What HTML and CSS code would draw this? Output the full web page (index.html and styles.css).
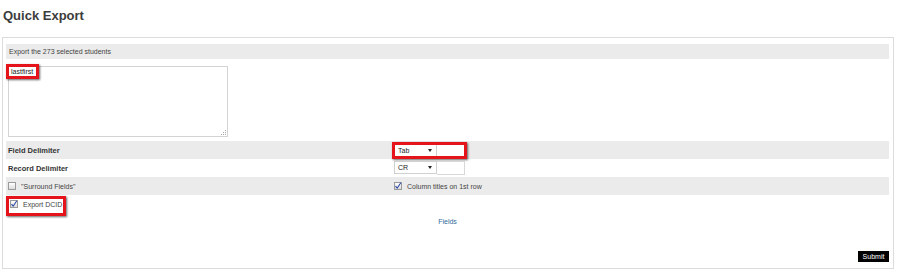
FILE: index.html
```
<!DOCTYPE html>
<html lang="en">
<head>
    <meta charset="UTF-8">
    <title>Quick Export</title>
    <link rel="stylesheet" href="styles.css">
</head>
<body>
    <h1 class="title">Quick Export</h1>

    <form class="box">
        <div class="head-row">Export the 273 selected students</div>

        <div class="text-row">
            <div class="textarea">
                <span class="mark">lastfirst<span class="hl"></span></span>
                <svg class="grip" width="6" height="6" viewBox="0 0 6 6">
                    <rect x="5" y="1" width="1" height="1" fill="#aaa"/>
                    <rect x="5" y="3" width="1" height="1" fill="#aaa"/>
                    <rect x="3" y="3" width="1" height="1" fill="#aaa"/>
                    <rect x="5" y="5" width="1" height="1" fill="#aaa"/>
                    <rect x="3" y="5" width="1" height="1" fill="#aaa"/>
                    <rect x="1" y="5" width="1" height="1" fill="#aaa"/>
                </svg>
            </div>
        </div>

        <div class="row alt">
            <strong>Field Delimiter</strong>
            <div class="pick">
                <span class="select">Tab<span class="caret"></span></span><span class="field"></span>
                <span class="hl"></span>
            </div>
        </div>

        <div class="row">
            <strong>Record Delimiter</strong>
            <div class="pick">
                <span class="select">CR<span class="caret"></span></span><span class="field small"></span>
            </div>
        </div>

        <div class="row alt">
            <label class="check"><span class="cb"></span>"Surround Fields"</label>
            <label class="check"><span class="cb"><svg width="8" height="8" viewBox="0 0 8 8"><path d="M1.5 4.2 L3.2 6.2 L6.8 0.8" fill="none" stroke="#2b47a6" stroke-width="1.1"/></svg></span>Column titles on 1st row</label>
        </div>

        <div class="row">
            <label class="check dcid"><span class="cb"><svg width="8" height="8" viewBox="0 0 8 8"><path d="M1.5 4.2 L3.2 6.2 L6.8 0.8" fill="none" stroke="#2b47a6" stroke-width="1.1"/></svg></span>Export DCID<span class="hl"></span></label>
        </div>

        <div class="fields-row"><a href="#">Fields</a></div>

        <div class="submit-row">
            <button type="button" class="submit">Submit</button>
        </div>
    </form>
</body>
</html>
```

FILE: styles.css
```
body {
    margin: 0;
    padding: 0 0 0 2px;
    font-family: "Liberation Sans", Arial, sans-serif;
    font-size: 8px;
    color: #333;
    background: #fff;
}

.title {
    margin: 8px 0 13px 1px;
    font-size: 13px;
    line-height: 16px;
    color: #3c3c3c;
}

.box {
    width: 892px;
    box-sizing: border-box;
    border: 1px solid #dcdcdc;
    padding: 6px 4px 6px 3px;
    margin: 0;
}

.head-row {
    height: 15px;
    line-height: 15px;
    padding-left: 3px;
    background: #ebebeb;
    color: #444;
    font-size: 7px;
}

.text-row {
    padding: 7px 0 4px 2px;
}

.textarea {
    position: relative;
    width: 220px;
    height: 71px;
    box-sizing: border-box;
    border: 1px solid #d4d4d4;
    padding: 0 2px;
    font-size: 7px;
    line-height: 9px;
    color: #222;
}

.mark {
    position: relative;
}

.grip {
    position: absolute;
    right: 1px;
    bottom: 1px;
}

.hl {
    position: absolute;
    top: -3px;
    left: -4px;
    right: -4px;
    bottom: -3px;
    border: 3px solid #e5141b;
    box-shadow: 1px 1px 2px rgba(0, 0, 0, 0.6);
    pointer-events: none;
}

.mark .hl {
    top: -4px;
    left: -5px;
    right: -6px;
    bottom: -4px;
}

.row {
    display: grid;
    grid-template-columns: 386px 1fr;
    align-items: center;
    height: 18px;
    padding-left: 2px;
}

.row.alt {
    background: #ebebeb;
}

.row strong {
    font-size: 7.5px;
    color: #333;
}

.pick {
    position: relative;
    display: flex;
    width: max-content;
}

.pick .hl {
    top: -2px;
    left: -2px;
    right: -2px;
    bottom: -2px;
}

.select {
    display: flex;
    align-items: center;
    justify-content: space-between;
    width: 43px;
    height: 13px;
    box-sizing: border-box;
    border: 1px solid #d0d0d0;
    background: #fff;
    padding: 0 4px 0 3px;
    font-size: 7px;
    color: #222;
}

.caret {
    width: 0;
    height: 0;
    border-left: 2.5px solid transparent;
    border-right: 2.5px solid transparent;
    border-top: 3px solid #222;
}

.field {
    width: 28px;
    height: 13px;
    box-sizing: border-box;
    border: 1px solid #d8d8d8;
    border-left: none;
    background: #fff;
}

.field.small {
    height: 14px;
}

.check {
    position: relative;
    display: flex;
    align-items: center;
    gap: 5px;
    width: max-content;
    font-size: 7px;
    color: #444;
}

.cb {
    display: inline-block;
    width: 8px;
    height: 8px;
    box-sizing: border-box;
    border: 1px solid #9a9a9a;
    background: linear-gradient(#fff, #dcdcdc);
    line-height: 0;
}

.cb svg {
    margin: -1px 0 0 -1px;
}

.dcid {
    padding-left: 2px;
}

.dcid .hl {
    top: -4px;
    left: -2px;
    right: -4px;
    bottom: -8px;
}

.fields-row {
    height: 17px;
    line-height: 17px;
    text-align: center;
    font-size: 7px;
}

.fields-row a {
    color: #2f6a9a;
    text-decoration: none;
}

.submit-row {
    display: flex;
    justify-content: flex-end;
    margin-top: 21px;
}

.submit {
    height: 11px;
    width: 31px;
    padding: 0;
    border: none;
    background: #000;
    color: #fff;
    font-family: "Liberation Sans", Arial, sans-serif;
    font-size: 7px;
    line-height: 11px;
}
```
